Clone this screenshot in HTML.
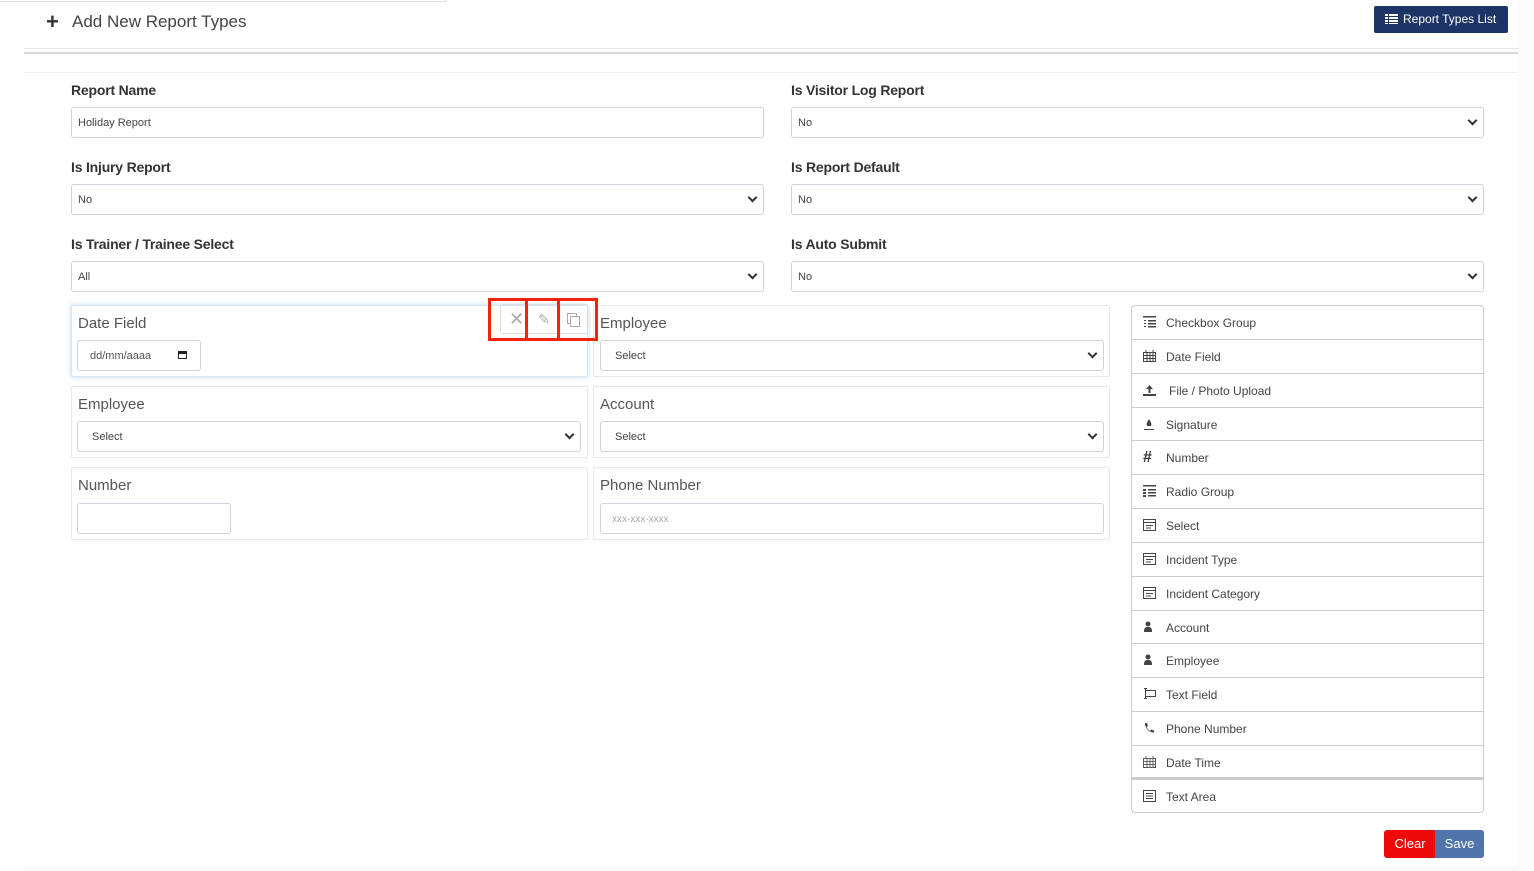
<!DOCTYPE html>
<html><head><meta charset="utf-8"><style>
*{box-sizing:border-box;margin:0;padding:0}
body{width:1534px;height:871px;background:#fff;font-family:"Liberation Sans",sans-serif;color:#333;position:relative;overflow:hidden}
.a{position:absolute}
.lbl{position:absolute;font-size:14px;font-weight:bold;color:#333;letter-spacing:-0.2px}
.inp{position:absolute;height:31px;border:1px solid #ced4da;border-radius:3px;font-size:11px;color:#444;padding-left:6px;line-height:31px;background:#fff}
.chev{position:absolute;right:7px;width:7px;height:7px;border-right:2px solid #333;border-bottom:2px solid #333;transform:rotate(45deg);top:9px}
.card{position:absolute;border:1px solid #e8e8e8;border-radius:2px;background:#fff}
.ct{position:absolute;left:6px;top:9px;font-size:15px;color:#555}
.list{position:absolute;left:1131px;top:305px;width:353px;height:508px;border:1px solid #ccc;border-radius:4px}
.row{height:33.85px;border-bottom:1px solid #ccc;font-size:12px;color:#444;line-height:34px;padding-left:34px;position:relative}
.row:last-child{border-bottom:none}
.ic{position:absolute;left:11px;top:10px;width:13px;height:12px}
.rb{position:absolute;border:3px solid #f5230a}
</style></head><body>
<div class="a" style="left:0;top:0;width:447px;height:2px;border-bottom:1px solid #ddd;border-right:1px solid #ddd;border-radius:0 0 4px 0"></div>
<div class="a" style="left:1518px;top:0;width:16px;height:871px;background:#fafafa"></div>
<div class="a" style="left:24px;top:866px;width:1494px;height:5px;background:#fafafa"></div>
<div class="a" style="left:46px;top:9px;font-size:22px;font-weight:bold;color:#333">+</div>
<div class="a" style="left:72px;top:12px;font-size:17px;color:#444">Add New Report Types</div>
<div class="a" style="left:24px;top:48px;width:1494px;height:1px;background:#e4e4e4"></div>
<div class="a" style="left:24px;top:52px;width:1494px;height:2px;background:#d5d9de"></div>
<div class="a" style="left:24px;top:72px;width:1494px;height:1px;background:#f0f0f0"></div>
<div class="a" style="left:1374px;top:6px;width:134px;height:27px;background:#1c3466;border-radius:2px;color:#fff;font-size:12px;line-height:26px;padding-left:29px">Report Types List
<svg class="a" style="left:11px;top:8px" width="13" height="10"><g fill="#fff"><rect x="0" y="0" width="3" height="2"/><rect x="4" y="0" width="9" height="2"/><rect x="0" y="3" width="3" height="2"/><rect x="4" y="3" width="9" height="2"/><rect x="0" y="6" width="3" height="2"/><rect x="4" y="6" width="9" height="2"/><rect x="0" y="9" width="3" height="1"/><rect x="4" y="9" width="9" height="1"/></g></svg></div>

<div class="lbl" style="left:71px;top:82px">Report Name</div>
<div class="inp" style="left:71px;top:107px;width:693px">Holiday Report</div>
<div class="lbl" style="left:791px;top:82px">Is Visitor Log Report</div>
<div class="inp" style="left:791px;top:107px;width:693px">No<i class="chev"></i></div>
<div class="lbl" style="left:71px;top:159px">Is Injury Report</div>
<div class="inp" style="left:71px;top:184px;width:693px">No<i class="chev"></i></div>
<div class="lbl" style="left:791px;top:159px">Is Report Default</div>
<div class="inp" style="left:791px;top:184px;width:693px">No<i class="chev"></i></div>
<div class="lbl" style="left:71px;top:236px">Is Trainer / Trainee Select</div>
<div class="inp" style="left:71px;top:261px;width:693px">All<i class="chev"></i></div>
<div class="lbl" style="left:791px;top:236px">Is Auto Submit</div>
<div class="inp" style="left:791px;top:261px;width:693px">No<i class="chev"></i></div>

<div class="card" style="left:71px;top:305px;width:517px;height:72px;border-color:#d5e6f5;box-shadow:0 0 5px rgba(100,160,220,.45)"><div class="ct">Date Field</div>
<div class="inp" style="left:5px;top:34px;width:124px;padding-left:12px;color:#555">dd/mm/aaaa<span class="a" style="left:100px;top:10px;width:9px;height:8px;border:1.5px solid #222;border-top-width:3px"></span></div>
<div class="a" style="left:428px;top:-2px;width:88px;height:30px;border:1px solid #ddd;border-radius:3px"></div>
<div class="a" style="left:437px;top:3px;font-size:18px;color:#aaa">✕</div>
<div class="a" style="left:466px;top:5px;font-size:14px;color:#aaa">✎</div>
<div class="a" style="left:495px;top:7px;width:10px;height:11px;border:1px solid #aaa"></div>
<div class="a" style="left:498px;top:10px;width:10px;height:11px;border:1px solid #aaa;background:#fff"></div>
</div>

<div class="card" style="left:593px;top:305px;width:517px;height:72px"><div class="ct" style="left:6px">Employee</div>
<div class="inp" style="left:6px;top:34px;width:504px;padding-left:14px">Select<i class="chev"></i></div></div>
<div class="card" style="left:71px;top:386px;width:517px;height:72px"><div class="ct">Employee</div>
<div class="inp" style="left:5px;top:34px;width:504px;padding-left:14px">Select<i class="chev"></i></div></div>
<div class="card" style="left:593px;top:386px;width:517px;height:72px"><div class="ct">Account</div>
<div class="inp" style="left:6px;top:34px;width:504px;padding-left:14px">Select<i class="chev"></i></div></div>
<div class="card" style="left:71px;top:467px;width:517px;height:73px"><div class="ct">Number</div>
<div class="inp" style="left:5px;top:35px;width:154px"></div></div>
<div class="card" style="left:593px;top:467px;width:517px;height:73px"><div class="ct">Phone Number</div>
<div class="inp" style="left:6px;top:35px;width:504px;padding-left:11px;color:#aaa;font-size:10px">xxx-xxx-xxxx</div></div>

<div class="rb" style="left:488px;top:298px;width:40px;height:43px"></div>
<div class="rb" style="left:525px;top:298px;width:35px;height:43px"></div>
<div class="rb" style="left:557px;top:298px;width:41px;height:43px"></div>

<div class="list">
<div class="row"><svg class="ic"><g fill="#444"><rect x="0" y="0" width="13" height="1.5"/><rect x="5" y="4" width="8" height="1.5"/><rect x="5" y="7" width="8" height="1.5"/><rect x="5" y="10" width="8" height="1.5"/><rect x="1" y="4" width="2" height="1"/><rect x="1" y="7" width="2" height="1"/><rect x="1" y="10" width="2" height="1"/></g></svg>Checkbox Group</div>
<div class="row"><svg class="ic"><rect x="0.5" y="2.5" width="12" height="9" fill="none" stroke="#444"/><path d="M0 5.5H13M0 8.5H13M4 2V12M7 2V12M10 2V12M3 0v3M10 0v3" stroke="#444"/></svg>Date Field</div>
<div class="row" style="padding-left:37px"><svg class="ic"><path d="M6.5 1L3 5h2.5v4h2V5H10z" fill="#444"/><rect x="0" y="10" width="13" height="2" fill="#444"/></svg>File / Photo Upload</div>
<div class="row"><svg class="ic"><path d="M6 1C4 4 3 6 4 8h4c1-2 0-4-2-7z" fill="#444"/><rect x="1" y="11" width="10" height="1" fill="#444"/></svg>Signature</div>
<div class="row"><span class="a" style="left:11px;top:0;font-size:16px;font-weight:bold;color:#333">#</span>Number</div>
<div class="row"><svg class="ic"><g fill="#444"><rect x="0" y="0" width="13" height="1.5"/><rect x="5" y="4" width="8" height="1.5"/><rect x="5" y="7" width="8" height="1.5"/><rect x="5" y="10" width="8" height="1.5"/><rect x="0" y="4" width="3" height="2"/><rect x="0" y="7" width="3" height="2"/><rect x="0" y="10" width="3" height="2"/></g></svg>Radio Group</div>
<div class="row"><svg class="ic"><rect x="0.5" y="0.5" width="12" height="11" fill="none" stroke="#444"/><path d="M0 3.5H13M3 6.5H10M3 9H8" stroke="#444"/></svg>Select</div>
<div class="row"><svg class="ic"><rect x="0.5" y="0.5" width="12" height="11" fill="none" stroke="#444"/><path d="M0 3.5H13M3 6.5H10M3 9H8" stroke="#444"/></svg>Incident Type</div>
<div class="row"><svg class="ic"><rect x="0.5" y="0.5" width="12" height="11" fill="none" stroke="#444"/><path d="M0 3.5H13M3 6.5H10M3 9H8" stroke="#444"/></svg>Incident Category</div>
<div class="row"><svg class="ic"><circle cx="5" cy="3" r="2.5" fill="#444"/><path d="M1 11c0-4 1-5 4-5s4 1 4 5z" fill="#444"/></svg>Account</div>
<div class="row"><svg class="ic"><circle cx="5" cy="3" r="2.5" fill="#444"/><path d="M1 11c0-4 1-5 4-5s4 1 4 5z" fill="#444"/></svg>Employee</div>
<div class="row"><svg class="ic"><rect x="2.5" y="2.5" width="10" height="6" fill="none" stroke="#444"/><path d="M2.5 0v11M1 0.5h3M1 10.5h3" stroke="#444"/></svg>Text Field</div>
<div class="row"><svg class="ic"><path d="M2 1l2 0 1 3-1.5 1c1 2 2 3 3.5 4l1-1.5 3 1v2c-5 0-9-4-9-9.5z" fill="#444"/></svg>Phone Number</div>
<div class="row" style="border-bottom:3px solid #ccc"><svg class="ic"><rect x="0.5" y="2.5" width="12" height="9" fill="none" stroke="#555"/><path d="M0 5.5H13M0 8.5H13M4 2V12M7 2V12M10 2V12M3 0v3M10 0v3" stroke="#666"/></svg>Date Time</div>
<div class="row"><svg class="ic"><rect x="0.5" y="0.5" width="12" height="11" fill="none" stroke="#444"/><path d="M3 3.5H10M3 6H10M3 8.5H10" stroke="#444"/></svg>Text Area</div>
</div>

<div class="a" style="left:1384px;top:830px;width:52px;height:28px;background:#ee0a0a;border-radius:3px 0 0 3px;color:#fff;font-size:13px;line-height:28px;text-align:center">Clear</div>
<div class="a" style="left:1435px;top:830px;width:49px;height:28px;background:#5274ad;border-radius:0 3px 3px 0;color:#fff;font-size:13px;line-height:28px;text-align:center">Save</div>
</body></html>
